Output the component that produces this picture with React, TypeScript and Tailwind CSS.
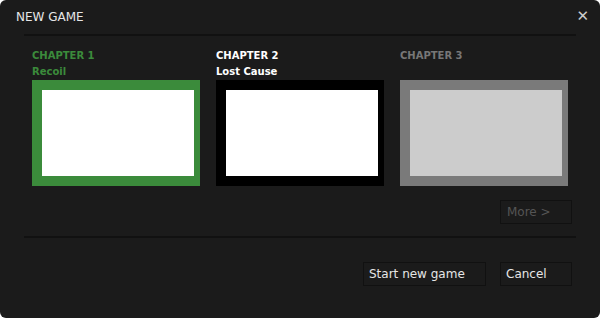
import React from 'react';

const CHAPTERS = [
  { id: 1, title: 'CHAPTER 1', name: 'Recoil', label: 'text-[#3b8b3b]', frame: 'border-[#3b8b3b]', fill: 'bg-white' },
  { id: 2, title: 'CHAPTER 2', name: 'Lost Cause', label: 'text-white', frame: 'border-black', fill: 'bg-white' },
  { id: 3, title: 'CHAPTER 3', name: '', label: 'text-[#777777]', frame: 'border-[#7a7a7a]', fill: 'bg-[#cccccc]' },
];

const App: React.FC = () => {
  return (
    <div
      className="w-[600px] h-[318px] bg-[#1b1b1b] text-[#e6e6e6] overflow-hidden rounded-[6px] flex flex-col"
      style={{ fontFamily: '"DejaVu Sans", Verdana, sans-serif' }}
    >
      {/* Header */}
      <div className="flex items-center justify-between pl-4 pr-[11px] h-[34px]">
        <span className="text-[12px] leading-none -mt-[1px]">NEW GAME</span>
        <span className="text-[15px] leading-none text-[#cccccc] font-bold -mt-[2px]">✕</span>
      </div>
      <div className="mx-6 h-[2px] bg-[#111111]"></div>

      {/* Chapters */}
      <div className="flex gap-4 pl-8 pt-[12px]">
        {CHAPTERS.map((c) => (
          <div key={c.id} className="w-[168px] flex flex-col">
            <span className={`text-[10px] font-bold leading-[16px] ${c.label}`}>{c.title}</span>
            <span className={`text-[10px] font-bold leading-[16px] h-[16px] ${c.label}`}>{c.name}</span>
            <div className={`h-[106px] border-t-[10px] border-b-[10px] border-l-[10px] border-r-[6px] ${c.frame}`}>
              <div className={`w-full h-full ${c.fill}`}></div>
            </div>
          </div>
        ))}
      </div>

      <div className="flex justify-end pr-7 pt-[14px]">
        <button className="w-[72px] h-[24px] border border-[#111111] text-left pl-[6px] text-[12px] text-[#555555]">
          More &gt;
        </button>
      </div>

      <div className="mx-6 mt-[12px] h-[2px] bg-[#111111]"></div>

      <div className="flex justify-end gap-[14px] pr-7 pt-[24px]">
        <button className="w-[123px] h-[24px] border border-[#111111] text-left pl-[5px] text-[12px] text-[#e6e6e6]">
          Start new game
        </button>
        <button className="w-[72px] h-[24px] border border-[#111111] text-left pl-[5px] text-[12px] text-[#e6e6e6]">
          Cancel
        </button>
      </div>
    </div>
  );
};

export default App;
